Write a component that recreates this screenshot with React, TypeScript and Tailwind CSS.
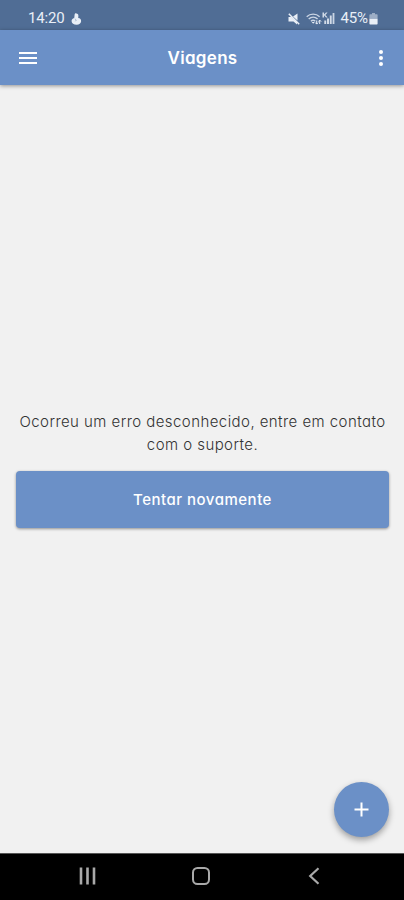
import type { ReactNode } from 'react';

function StatusBar() {
  return (
    <div className="flex h-[30px] shrink-0 items-center bg-[#506d95] pt-[7px] pr-[26px] pl-[28px] font-[Roboto,sans-serif] text-[15px] leading-none text-[#e9eff7]">
      <span className="tracking-[-0.15px]">14:20</span>
      <svg className="ml-[6px] h-3 w-[11px]" viewBox="0 0 11 12" fill="currentColor">
        <path d="M4.200 0.300c2.200 0 3.400 1 3.200 2.700L7.200 5c2 0.200 3.100 1.500 2.900 3.200C9.900 10.400 8.200 11.700 5.700 11.700 2.700 11.700 0.700 10.300 0.600 8.200 0.500 6.700 1.500 5.500 3.200 5.100 3.700 3.500 3.200 1.500 4.200 0.300z" />
        <path d="M3.800 5.800l1.500 1.200-1 1.300" fill="none" stroke="#8ba0bd" strokeWidth="0.7" />
      </svg>
      <div className="ml-auto flex items-center">
        <svg className="mr-px h-3 w-3" viewBox="0 0 12 12" fill="currentColor">
          <path d="M0.500 4h3l5.500 5.300V11.500L5.500 8.500h-5zM5 3.500L9.500 0.500v7z" />
          <path d="M0.800 0.800l10.400 10.400" stroke="currentColor" strokeWidth="1.500" />
        </svg>
        <svg className="ml-[5px] h-3 w-4" viewBox="0 0 16 12" fill="none" stroke="currentColor" strokeWidth="1.400">
          <path d="M0.700 3.700C4.300 0.300 10 0.300 13.600 3.700M2.700 6c2.600-2.400 6.300-2.400 8.900 0M4.900 8.200c1.300-1.200 3.100-1.200 4.400 0" opacity="0.8" />
          <path d="M5.700 9l1.500 1.700L8.700 9z" fill="currentColor" stroke="none" />
          <path d="M10.700 11V7.500M9.300 9.600l1.400 1.500 1.400-1.500M13.700 11V7.200M12.300 8.600l1.400-1.500 1.400 1.500" strokeWidth="1" />
        </svg>
        <svg className="h-[13px] w-[13px]" viewBox="0 0 13 13" fill="currentColor">
          <path d="M0.500 0.500h1.500v5H0.500zM2 2.500L4 0.500h1.600L3.400 3l2.300 2.500H4L2 3.300zM2.300 8.500h1.900V12H2.300zM5 6.500h2V12H5zM7.800 3.500h1.900V12H7.800z" opacity="0.85" />
          <path d="M10.600 1h1.800v11h-1.800z" opacity="0.8" />
        </svg>
        <span className="ml-[5px] tracking-[-0.1px]">45%</span>
        <svg className="ml-px h-3 w-[9px]" viewBox="0 0 9 12" fill="currentColor">
          <path d="M3 0h3v1.300h1.800q0.800 0 0.800 0.800V5.800H0.400V2.100q0-0.800 0.800-0.800H3z" opacity="0.5" />
          <path d="M0.400 5.800h8.200v4.900q0 0.800-0.800 0.800H1.200q-0.800 0-0.800-0.800z" />
        </svg>
      </div>
    </div>
  );
}

function IconButton({ label, children }: { label: string; children: ReactNode }) {
  return (
    <button type="button" aria-label={label} className="flex size-6 items-center justify-center">
      {children}
    </button>
  );
}

function AppBar() {
  return (
    <header className="z-10 flex h-[55px] shrink-0 items-center justify-between bg-[#6b90c7] pr-[11px] pl-4 text-white shadow-[0_1px_4px_rgba(0,0,0,0.4)]">
      <IconButton label="Menu">
        <svg className="h-3 w-[18px]" viewBox="0 0 18 12" fill="currentColor">
          <path d="M0 0h18v2H0zM0 5h18v2H0zM0 10h18v2H0z" />
        </svg>
      </IconButton>
      <h1 className="mr-1 pt-[2px] text-[17px] font-semibold tracking-[0.3px]">Viagens</h1>
      <IconButton label="Mais">
        <svg className="h-4 w-1" viewBox="0 0 4 16" fill="currentColor">
          <circle cx="2" cy="2" r="2" />
          <circle cx="2" cy="8" r="2" />
          <circle cx="2" cy="14" r="2" />
        </svg>
      </IconButton>
    </header>
  );
}

function NavigationBar() {
  return (
    <nav className="flex h-[47px] shrink-0 items-center justify-between border-t border-[#555] bg-black pr-[84px] pb-[2px] pl-[79px] text-[#a9a9a9]">
      <svg className="h-[18px] w-[17px]" viewBox="0 0 17 18" stroke="currentColor" strokeWidth="2.600">
        <path d="M2 0.500v17M8.500 0.500v17M15 0.500v17" />
      </svg>
      <svg className="mr-[3px] h-[18px] w-[18px]" viewBox="0 0 18 18" fill="none" stroke="currentColor" strokeWidth="2">
        <rect x="1" y="1" width="16" height="16" rx="4.500" />
      </svg>
      <svg className="h-[18px] w-3" viewBox="0 0 12 18" fill="none" stroke="currentColor" strokeWidth="2.200">
        <path d="M10.500 1.200L2.200 9l8.300 7.800" />
      </svg>
    </nav>
  );
}

export default function App() {
  return (
    <div className="flex h-[900px] w-[404px] flex-col overflow-hidden bg-[#f1f1f1] font-[Inter,sans-serif] [font-feature-settings:'cv11']">
      <StatusBar />
      <AppBar />
      <main className="relative flex flex-1 flex-col justify-center px-4 pb-[2px]">
        <p className="-mr-px pt-px text-center text-[15px] leading-[23px] font-light tracking-[0.44px] whitespace-nowrap text-[#333]">
          Ocorreu um erro desconhecido, entre em contato
          <br />
          com o suporte.
        </p>
        <button
          type="button"
          className="mt-[15px] h-[57px] w-[373px] rounded-[4px] bg-[#6b90c7] pt-[3px] text-[15px] font-medium tracking-[0.5px] text-white shadow-[0_1px_3px_rgba(0,0,0,0.4)]"
        >
          Tentar novamente
        </button>
        <button
          type="button"
          aria-label="Adicionar"
          className="absolute right-[15px] bottom-[16px] flex size-[55px] items-center justify-center rounded-full bg-[#6b90c7] text-white shadow-[0_3px_6px_rgba(0,0,0,0.35)]"
        >
          <svg className="size-[15px]" viewBox="0 0 15 15" stroke="currentColor" strokeWidth="2">
            <path d="M7.500 0.500v14M0.500 7.500h14" />
          </svg>
        </button>
      </main>
      <NavigationBar />
    </div>
  );
}
